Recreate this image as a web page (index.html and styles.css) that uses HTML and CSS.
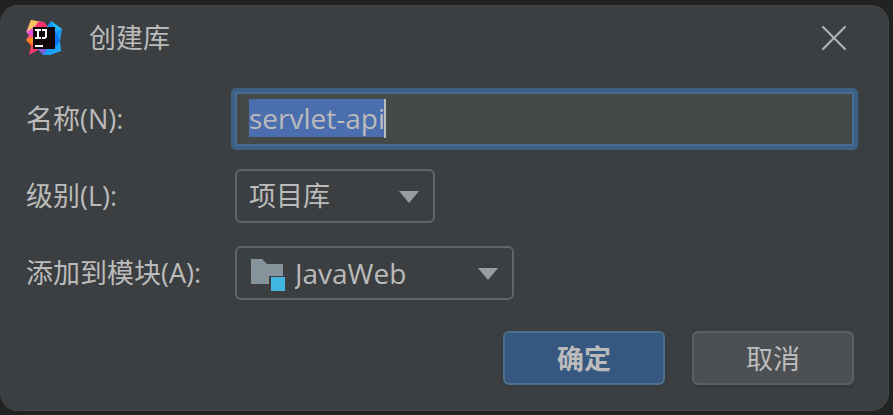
FILE: index.html
```html
<!DOCTYPE html>
<html lang="zh-CN">
<head>
    <meta charset="UTF-8">
    <meta name="viewport" content="width=device-width, initial-scale=1.0">
    <title>创建库</title>
    <link rel="stylesheet" href="styles.css">
</head>
<body>

<form class="dialog" id="libraryForm">
    <div class="title-bar">
        <svg class="logo" viewBox="0 0 36 36" aria-hidden="true">
            <defs>
                <linearGradient id="warm" x1="0" y1="0" x2="0.3" y2="1">
                    <stop offset="0" stop-color="#fdb060"/>
                    <stop offset="0.35" stop-color="#f060c0"/>
                    <stop offset="0.6" stop-color="#ff5a2c"/>
                    <stop offset="1" stop-color="#fb2f86"/>
                </linearGradient>
                <linearGradient id="cool" x1="0" y1="0" x2="1" y2="1">
                    <stop offset="0" stop-color="#12a0f5"/>
                    <stop offset="0.5" stop-color="#1590f8"/>
                    <stop offset="1" stop-color="#22b4f8"/>
                </linearGradient>
            </defs>
            <path fill="url(#warm)" d="M5 0 18 2 22 8 22 28 12 30 3 35 5 26 0 20 3 15 0 12z"/>
            <path fill="#fb2d68" d="M12 2 18 2 22 8 9 8z"/>
            <path fill="#f7c45c" d="M5 0 12 2 7 8 1 12z"/>
            <path fill="#e04fe0" d="M1 12 7 8 7 17z"/>
            <path fill="#ff8a1c" d="M0 20 7 17 7 25z"/>
            <path fill="url(#cool)" d="M20 8 25 1 36 9 34 21 35 31 24 35 17 35 11 28z"/>
            <path fill="#22b8f6" d="M25 1 36 9 29 11z"/>
            <path fill="#0c72ee" d="M29 11 34 21 29 27z"/>
            <path fill="#8a58d8" d="M11 28 21 28 17 35z"/>
            <path fill="#100608" d="M7 7h22v22H7z"/>
            <path fill="none" stroke="#fff" stroke-width="2" d="M9 10h6M12 10v8M9 18h6M16 10h4v6q0 2-2 2h-2"/>
            <path fill="#fff" d="M9 25h8v2H9z"/>
        </svg>
        <h1>创建库</h1>
        <button type="button" class="close" aria-label="关闭">
            <svg viewBox="0 0 22 22" aria-hidden="true">
                <path fill="none" stroke="#afb1b3" stroke-width="2" stroke-linecap="round" d="M1 1 21 21M21 1 1 21"/>
            </svg>
        </button>
    </div>

    <div class="fields">
        <label for="name">名称(N):</label>
        <div class="text-field">
            <input type="text" id="name" value="servlet-api" accesskey="n" autocomplete="off" spellcheck="false">
            <span class="caret"></span>
        </div>

        <label for="level">级别(L):</label>
        <div class="combo level">
            <select id="level" accesskey="l">
                <option>项目库</option>
                <option>全局库</option>
            </select>
        </div>

        <label for="module">添加到模块(A):</label>
        <div class="combo module">
            <svg class="folder" viewBox="0 0 34 32" aria-hidden="true">
                <path fill="#87939a" d="M0 0h11l5 5h16v12H18v8H0z"/>
                <path fill="#40b6e0" d="M20 18h14v14H20z"/>
            </svg>
            <select id="module" accesskey="a">
                <option>JavaWeb</option>
            </select>
        </div>
    </div>

    <div class="buttons">
        <button type="submit" class="primary">确定</button>
        <button type="button">取消</button>
    </div>
</form>

<script>
    const nameInput = document.getElementById('name');
    nameInput.focus();
    nameInput.select();

    document.getElementById('libraryForm').addEventListener('submit', function(event) {
        event.preventDefault();
    });
</script>

</body>
</html>
```
FILE: styles.css
```css
* {
    box-sizing: border-box;
}
body {
    margin: 0;
    padding: 5px 4px 4px 0;
    background: #222;
    color: #bbb;
    font-family: "Open Sans", "Noto Sans CJK SC", sans-serif;
    font-size: 27px;
    line-height: 38px;
}
input, select, button {
    font: inherit;
    color: inherit;
}
.dialog {
    padding: 0 34px 25px 26px;
    background: #3c3f41;
    border: 1px solid #444545;
    border-left: none;
    border-radius: 18px;
}
.title-bar {
    display: flex;
    align-items: center;
    height: 63px;
    margin-bottom: 23px;
}
.logo {
    width: 36px;
    height: 36px;
}
h1 {
    flex: 1;
    margin: 0 0 0 27px;
    font-size: 27px;
    font-weight: normal;
}
.close {
    width: 40px;
    height: 40px;
    padding: 8px;
    border: none;
    background: none;
}
.close svg {
    display: block;
    width: 24px;
    height: 24px;
}
.fields {
    display: grid;
    grid-template-columns: 209px 1fr;
    row-gap: 23px;
    align-items: center;
}
.text-field, .combo {
    position: relative;
}
.text-field input {
    display: block;
    width: 100%;
    height: 54px;
    padding: 0 12px 2px;
    border: 2px solid #466d94;
    border-radius: 1px;
    background: #45494a;
    outline: 4px solid #3d6185;
    font-size: 28px;
}
.text-field input::selection {
    background: #4b6eaf;
    color: #bbb;
}
.caret {
    position: absolute;
    top: 7px;
    left: 149px;
    width: 2px;
    height: 39px;
    background: #bbb;
}
.level {
    width: 200px;
}
.module {
    width: 279px;
}
.combo select {
    display: block;
    width: 100%;
    height: 54px;
    padding: 0 12px;
    border: 2px solid #646464;
    border-radius: 6px;
    background: none;
    outline: none;
    appearance: none;
}
.module select {
    padding-left: 58px;
    font-size: 28px;
}
.combo::after {
    content: "";
    position: absolute;
    top: 22px;
    right: 16px;
    border: 10px solid transparent;
    border-top: 12px solid #9a9da0;
    border-bottom: none;
}
.folder {
    position: absolute;
    top: 13px;
    left: 16px;
    width: 34px;
    height: 32px;
}
.buttons {
    display: flex;
    justify-content: flex-end;
    gap: 27px;
    margin-top: 31px;
}
.buttons button {
    width: 162px;
    height: 54px;
    padding: 2px 0 0;
    border: 2px solid #5e6060;
    border-radius: 6px;
    background: #4c5052;
    box-shadow: 0 2px 2px #36393b;
}
.buttons .primary {
    border-color: #4c708c;
    background: #365880;
    font-weight: bold;
}
```
